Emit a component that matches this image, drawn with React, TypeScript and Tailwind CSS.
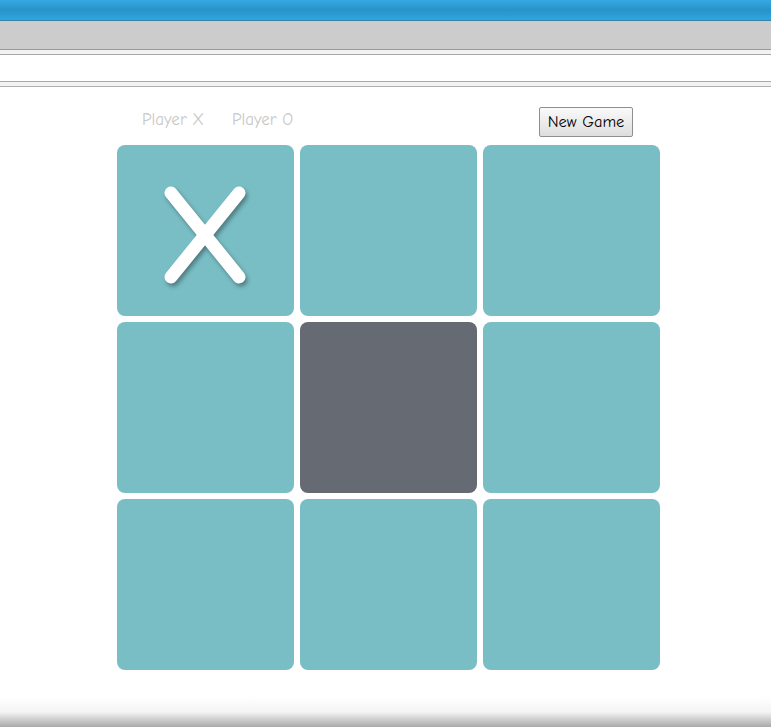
import React, { useState } from "react";

const font = { fontFamily: '"Comic Sans MS", "Comic Neue", "DejaVu Sans", sans-serif' };

function XMark() {
  return (
    <svg width="90" height="105" viewBox="0 0 90 105" className="mt-[14px] drop-shadow-[2px_3px_2px_rgba(0,0,0,0.35)]">
      <line x1="10" y1="8" x2="78" y2="92" stroke="white" strokeWidth="13" strokeLinecap="round" />
      <line x1="78" y1="8" x2="10" y2="92" stroke="white" strokeWidth="13" strokeLinecap="round" />
    </svg>
  );
}

export default function App(): React.ReactElement {
  const [board, setBoard] = useState<(string | null)[]>(["X", null, null, null, null, null, null, null, null]);
  const hover = 4;

  return (
    <div className="relative w-full h-[727px] bg-white overflow-hidden" style={font}>
      {/* browser chrome */}
      <div className="h-[20px] bg-gradient-to-b from-[#35a9e2] via-[#2893c8] to-[#2ea6e0]" />
      <div className="h-px bg-[#3b7ea6]" />
      <div className="h-[28px] bg-[#cccccc]" />
      <div className="h-px bg-[#9a9a9a]" />
      <div className="h-[4px] bg-[#f2f2f2]" />
      <div className="h-px bg-[#a8a8a8]" />
      <div className="h-[26px] bg-white" />
      <div className="h-px bg-[#a8a8a8]" />
      <div className="h-[4px] bg-[#f2f2f2]" />
      <div className="h-px bg-[#b0b0b0]" />

      <div className="pl-[117px] pt-[20px]">
        <div className="flex items-center w-[543px] h-[30px]">
          <span className="ml-[25px] -mt-[5px] text-[17px] text-[#c8c8c8]">Player X</span>
          <span className="ml-[28px] -mt-[5px] text-[17px] text-[#c8c8c8]">Player O</span>
          <button
            className="ml-auto mr-[27px] h-[30px] w-[94px] text-[16.5px] text-black border border-[#8f8f8f] bg-gradient-to-b from-[#fafafa] to-[#dedede] rounded-[2px]"
            style={font}
            onClick={() => setBoard([null, null, null, null, null, null, null, null, null])}
          >
            New Game
          </button>
        </div>

        <div className="mt-[8px] grid grid-cols-[177px_177px_177px] grid-rows-[171px_171px_171px] gap-[6px] w-[543px]">
          {board.map((v, i) => (
            <div
              key={i}
              className={`flex items-center justify-center rounded-[8px] ${i === hover ? "bg-[#666a72]" : "bg-[#79bec5]"}`}
            >
              {v === "X" && <XMark />}
            </div>
          ))}
        </div>
      </div>

      <div className="absolute left-0 right-0 bottom-0 h-[30px] bg-gradient-to-b from-white/0 via-[#f4f4f4] to-[#a9a9a9] pointer-events-none" />
    </div>
  );
}
